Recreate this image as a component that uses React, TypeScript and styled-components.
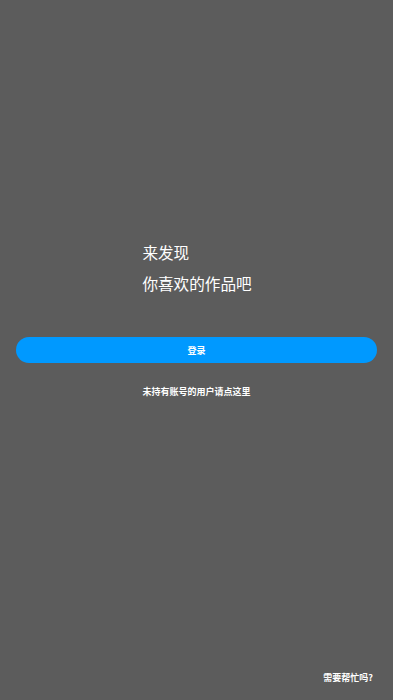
import React from "react";
import styled, { createGlobalStyle } from "styled-components";

const GlobalStyle = createGlobalStyle`
  html, body {
    margin: 0;
    padding: 0;
    background: #5c5c5c;
  }
  * { box-sizing: border-box; }
`;

const Page = styled.div`
  height: 700px;
  display: flex;
  flex-direction: column;
  align-items: center;
  background: #5c5c5c;
  font-family: "Noto Sans CJK SC", "Noto Sans", sans-serif;
  color: #ffffff;
  padding: 237px 16px 16px;
`;

const Heading = styled.div`
  display: flex;
  flex-direction: column;
  font-size: 15.6px;
  line-height: 31px;
  text-align: left;
  margin-left: 1px;
`;

const LoginButton = styled.button`
  margin-top: 38px;
  width: 100%;
  height: 26px;
  border: none;
  border-radius: 13px;
  background: #0099ff;
  color: #ffffff;
  font-family: inherit;
  font-size: 9px;
  font-weight: 700;
  padding: 0;
  cursor: pointer;
`;

const SmallLink = styled.div`
  margin-top: 23px;
  font-size: 9px;
  line-height: 12px;
  font-weight: 700;
  text-align: center;
`;

const Footer = styled.div`
  margin-top: auto;
  align-self: flex-end;
  font-size: 9px;
  line-height: 12px;
  font-weight: 700;
  padding-right: 4px;
`;

export default function App() {
  return (
    <>
      <GlobalStyle />
      <Page>
        <Heading>
          <span>来发现</span>
          <span>你喜欢的作品吧</span>
        </Heading>
        <LoginButton>登录</LoginButton>
        <SmallLink>未持有账号的用户请点这里</SmallLink>
        <Footer>需要帮忙吗?</Footer>
      </Page>
    </>
  );
}
